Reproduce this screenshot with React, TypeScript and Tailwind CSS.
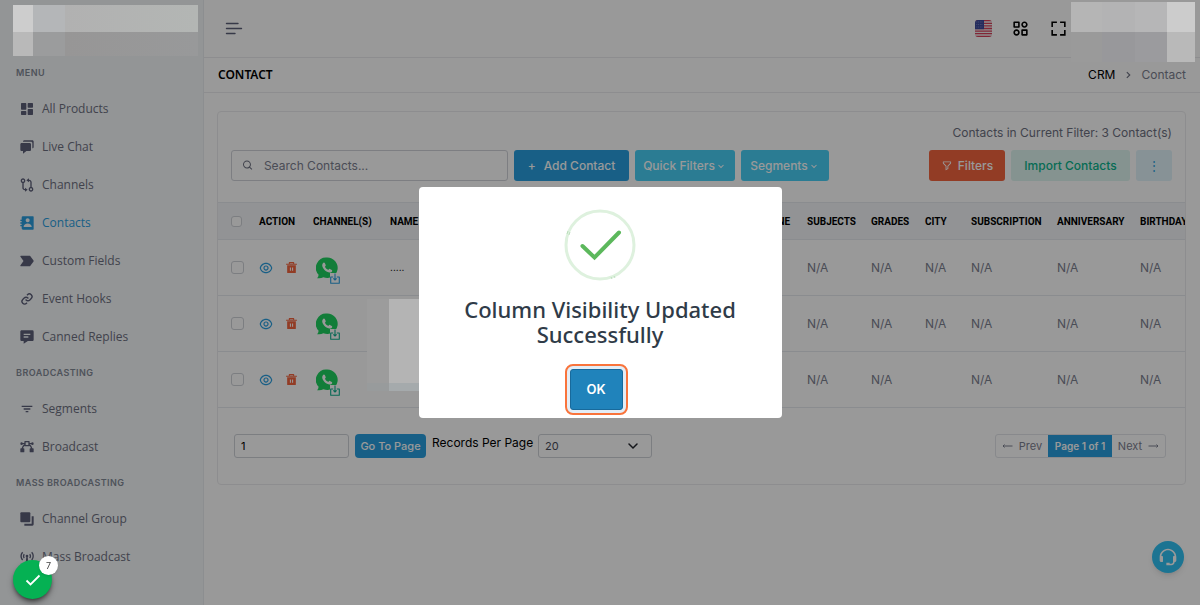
import { useState, type ReactNode } from 'react';
import type { IconType } from 'react-icons';
import {
  BiBroadcast,
  BiCategoryAlt,
  BiChevronDown,
  BiChevronRight,
  BiFilter,
  BiFilterAlt,
  BiFullscreen,
  BiGitCompare,
  BiLink,
  BiSearch,
  BiSolidChat,
  BiSolidContact,
  BiSolidDashboard,
  BiSolidLabel,
  BiSolidMessageDetail,
  BiSolidVector,
  BiSupport,
} from 'react-icons/bi';
import { RiDeleteBin5Fill, RiEyeLine } from 'react-icons/ri';

type MenuItem = { label: string; icon: IconType | typeof GroupIcon; active?: boolean };
type MenuGroup = { title: string; items: MenuItem[] };

const MENU: MenuGroup[] = [
  {
    title: 'MENU',
    items: [
      { label: 'All Products', icon: BiSolidDashboard },
      { label: 'Live Chat', icon: BiSolidChat },
      { label: 'Channels', icon: BiGitCompare },
      { label: 'Contacts', icon: BiSolidContact, active: true },
      { label: 'Custom Fields', icon: BiSolidLabel },
      { label: 'Event Hooks', icon: BiLink },
      { label: 'Canned Replies', icon: BiSolidMessageDetail },
    ],
  },
  {
    title: 'BROADCASTING',
    items: [
      { label: 'Segments', icon: BiFilter },
      { label: 'Broadcast', icon: BiSolidVector },
    ],
  },
  {
    title: 'MASS BROADCASTING',
    items: [
      { label: 'Channel Group', icon: GroupIcon },
      { label: 'Mass Broadcast', icon: BiBroadcast },
    ],
  },
];

const COLUMNS = [
  { label: 'ACTION', width: 'w-[54px]' },
  { label: 'CHANNEL(S)', width: 'w-[77px]' },
  { label: 'NAME', width: 'w-[367px]' },
  { label: 'PHONE', width: 'w-[50px]' },
  { label: 'SUBJECTS', width: 'w-16' },
  { label: 'GRADES', width: 'w-[54px]' },
  { label: 'CITY', width: 'w-[46px]' },
  { label: 'SUBSCRIPTION', width: 'w-[86px]' },
  { label: 'ANNIVERSARY', width: 'w-[83px]' },
  { label: 'BIRTHDAY', width: 'w-[98px]' },
];

const CONTACTS = [
  { id: 1, name: '.....', city: 'N/A', tone: 'text-[#2b9fe0]' },
  { id: 2, name: '', city: 'N/A', tone: 'text-[#12b090]' },
  { id: 3, name: '', city: '', tone: 'text-[#12b090]' },
];

function GroupIcon({ size = 16 }: { size?: number }) {
  return (
    <svg width={size} height={size} viewBox="0 0 24 24" fill="currentColor">
      <rect x="2" y="2" width="15" height="15" rx="1.5" />
      <path d="M19 8h3v12a2 2 0 0 1-2 2H8v-3h11z" />
    </svg>
  );
}

function MenuToggleIcon() {
  return (
    <svg width="18" height="14" viewBox="0 0 18 14" stroke="currentColor" strokeWidth="1.4" strokeLinecap="round">
      <path d="M1.5 1.5h11.5M1.5 6.5h15M1.5 11.5h8.5" />
    </svg>
  );
}

function FlagIcon() {
  return (
    <svg width="17" height="17" viewBox="0 0 17 17">
      <defs>
        <clipPath id="flag">
          <rect width="17" height="17" rx="3" />
        </clipPath>
      </defs>
      <g clipPath="url(#flag)">
        <rect width="17" height="17" fill="#f0f0f0" />
        <path
          d="M0 .7h17M0 3.3h17M0 5.9h17M0 8.5h17M0 11.1h17M0 13.7h17M0 16.3h17"
          stroke="#d8405a"
          strokeWidth="1.3"
        />
        <rect width="9" height="9.2" fill="#3c4a9c" />
        <path d="M1.5 2h6M1.5 4.5h6M1.5 7h6" stroke="#aab0dc" strokeWidth=".7" strokeDasharray=".7 1" />
      </g>
    </svg>
  );
}

function WhatsappIcon() {
  return (
    <svg width="22" height="22" viewBox="0 0 22 22">
      <path
        d="M11.2 .5a10.3 10.3 0 1 1-3.8 19.8c-1.8 1-4 1.3-6.3.9.9-1 1.4-2.1 1.5-3.5A10.3 10.3 0 0 1 11.2.5z"
        fill="#1fd15f"
      />
      <path
        d="M6.9 6.2c.6-.8 1.5-.9 1.9-.1l.9 1.9c.2.5-.1 1-.8 1.7.8 1.5 1.9 2.5 3.4 3.2.7-.9 1.2-1.2 1.6-1l1.9 1c.7.4.5 1.4-.2 2-1.2 1-2.7.9-4.6-.1-1.9-1-3.3-2.5-4.2-4.3-.8-1.7-.8-3.2.1-4.3z"
        fill="#fff"
      />
    </svg>
  );
}

function InboxIcon() {
  return (
    <svg width="10" height="11" viewBox="0 0 10 11" fill="none" stroke="currentColor" strokeLinejoin="round">
      <path d="M3.2 4H.7v6.2h8.6V4H6.8" strokeWidth="1.1" />
      <path d="M5 .5v6.2M3.4 5.3 5 7l1.6-1.7" strokeWidth="1.1" />
    </svg>
  );
}

function ArrowIcon({ flip = false }: { flip?: boolean }) {
  return (
    <svg width="11" height="6" viewBox="0 0 11 6" fill="none" stroke="currentColor" className={flip ? 'rotate-180' : ''}>
      <path d="M.5 3h9.5M8.5 1.5 10 3 8.500 4.500" />
    </svg>
  );
}

function Sidebar() {
  return (
    <aside className="w-[204px] shrink-0 border-r border-[#eaedf0] bg-[#f5f8fb]">
      <div className="h-14 pt-[5px] pl-[13px]">
        <div className="relative z-50 grid w-[185px] grid-cols-[20px_32px_1fr] grid-rows-[27px_24px]">
          <div className="bg-[#cdcdcd]" />
          <div className="bg-[#b4b6b8]" />
          <div className="bg-linear-to-r from-[#b1b1b1] to-[#b3b6b4]" />
          <div className="bg-[#b9b9b9]" />
          <div className="bg-[#9b9c9d]" />
          <div className="bg-linear-to-r from-[#979696] to-[#98999a]" />
        </div>
      </div>
      <nav className="font-['Open_Sans',sans-serif] text-xs">
        {MENU.map((group) => (
          <div key={group.title}>
            <h2 className="flex h-[34px] items-center pl-4 font-['Inter',sans-serif] text-[9px] font-semibold tracking-wider text-[#838a96]">
              {group.title}
            </h2>
            {group.items.map(({ label, icon: Icon, active }) => (
              <a
                key={label}
                href="#"
                className={`flex h-[38px] items-center gap-[7px] pl-[19px] ${active ? 'text-[#2b9fe0]' : 'text-[#6d7080]'}`}
              >
                <span className={active ? '' : 'text-[#5c5f78]'}>
                  <Icon size={16} />
                </span>
                {label}
              </a>
            ))}
          </div>
        ))}
      </nav>
    </aside>
  );
}

function Topbar() {
  return (
    <header className="relative flex h-[58px] items-center justify-between border-b border-[#ebebee] pr-[132px] pl-[21px]">
      <button aria-label="Toggle menu" className="text-[#5c5f78]">
        <MenuToggleIcon />
      </button>
      <div className="flex items-center gap-[19px] text-black">
        <button aria-label="Language">
          <FlagIcon />
        </button>
        <button aria-label="Apps">
          <BiCategoryAlt size={19} />
        </button>
        <button aria-label="Fullscreen">
          <BiFullscreen size={19} />
        </button>
      </div>
      <div className="absolute top-0.5 right-[5px] z-50 grid w-[124px] grid-cols-[31px_33px_32px_28px] grid-rows-[30px_30px]">
        <div className="bg-[#b5b5b5]" />
        <div className="bg-[#b3b3b4]" />
        <div className="bg-[#b6b6b7]" />
        <div className="bg-[#cccccc]" />
        <div className="bg-[#9a9a9a]" />
        <div className="bg-[#98989b]" />
        <div className="bg-[#9b9b9e]" />
        <div className="bg-[#b9b9b9]" />
      </div>
    </header>
  );
}

function ToolbarButton({ className, children }: { className: string; children: ReactNode }) {
  return (
    <button className={`flex h-[31px] items-center justify-center rounded-[3px] text-xs font-medium ${className}`}>
      {children}
    </button>
  );
}

function Toolbar() {
  return (
    <div className="px-[13px] pt-3">
      <p className="text-right text-xs leading-[18px] text-[#6d7080]">Contacts in Current Filter: 3 Contact(s)</p>
      <div className="mt-2 flex items-center justify-between">
        <div className="flex items-center gap-1.5">
          <label className="flex h-[31px] w-[277px] items-center gap-2.5 rounded-[3px] border border-[#d0d3d9] pl-2.5 text-[#6d7080]">
            <BiSearch size={13} />
            <input
              aria-label="Search contacts"
              placeholder="Search Contacts..."
              className="w-full bg-transparent text-xs outline-none placeholder:text-[#7c8090]"
            />
          </label>
          <ToolbarButton className="w-[115px] gap-2 bg-[#299fe0] text-white">
            <span>+</span>
            Add Contact
          </ToolbarButton>
          <ToolbarButton className="w-[100px] bg-[#49cff5] text-white">
            Quick Filters
            <BiChevronDown size={12} />
          </ToolbarButton>
          <ToolbarButton className="w-[88px] bg-[#49cff5] text-white">
            Segments
            <BiChevronDown size={12} />
          </ToolbarButton>
        </div>
        <div className="flex items-center gap-1.5">
          <ToolbarButton className="w-[76px] gap-1.5 bg-[#f3643f] text-white">
            <BiFilterAlt size={11} />
            Filters
          </ToolbarButton>
          <ToolbarButton className="w-[119px] bg-[#def6f0] text-[#0ab38c]">Import Contacts</ToolbarButton>
          <ToolbarButton className="w-9 bg-[#e1f3fa] text-[#2b9fe0]">
            <span aria-label="More">⋮</span>
          </ToolbarButton>
        </div>
      </div>
    </div>
  );
}

function CheckCell({ label, size }: { label: string; size: string }) {
  return (
    <input
      type="checkbox"
      aria-label={label}
      className={`block appearance-none rounded-[3px] border border-[#cfd2d8] bg-white ${size}`}
    />
  );
}

function ContactTable() {
  return (
    <div className="relative mt-[21px] overflow-x-clip">
      <table className="w-full min-w-[1012px] table-fixed border-collapse text-left">
        <thead className="bg-[#f3f6f9]">
          <tr className="h-[37px] border-y border-[#e6e9ee]">
            <th className="w-[33px] pl-[13px]">
              <CheckCell label="Select all contacts" size="size-[11px]" />
            </th>
            {COLUMNS.map((column) => (
              <th
                key={column.label}
                className={`pl-2 font-['Roboto',sans-serif] text-[10px] font-bold text-black ${column.width}`}
              >
                {column.label}
              </th>
            ))}
          </tr>
        </thead>
        <tbody>
          {CONTACTS.map((contact) => (
            <tr key={contact.id} className="h-14 border-b border-[#e6e9ee] text-xs text-[#7c8090]">
              <td className="pl-[13px]">
                <CheckCell label={`Select contact ${contact.id}`} size="size-[13px]" />
              </td>
              <td className="pl-2">
                <div className="flex items-center gap-3">
                  <button aria-label="View contact" className="text-[#2b9fe0]">
                    <RiEyeLine size={14} />
                  </button>
                  <button aria-label="Delete contact" className="text-[#f3643f]">
                    <RiDeleteBin5Fill size={13} />
                  </button>
                </div>
              </td>
              <td className="pl-[11px]">
                <div className="relative w-[22px]">
                  <WhatsappIcon />
                  <span className={`absolute top-4 left-3.5 bg-white ${contact.tone}`}>
                    <InboxIcon />
                  </span>
                </div>
              </td>
              <td className="pl-2 text-[10px] text-black">{contact.name}</td>
              <td />
              <td className="pl-2">N/A</td>
              <td className="pl-2">N/A</td>
              <td className="pl-2">{contact.city}</td>
              <td className="pl-2">N/A</td>
              <td className="pl-2">N/A</td>
              <td className="pl-2">N/A</td>
            </tr>
          ))}
        </tbody>
      </table>
      <div className="absolute top-[97px] left-[149px] z-50 grid grid-cols-[22px_30px] grid-rows-[84px_8px]">
        <div className="bg-[#9c9c9c]" />
        <div className="bg-[#b4b4b4]" />
        <div className="bg-[#989b9c]" />
        <div className="bg-[#a5aaac]" />
      </div>
    </div>
  );
}

function Pager() {
  const [page, setPage] = useState('1');

  return (
    <div className="flex items-center justify-between pt-[26px] pr-[19px] pb-[26px] pl-4 text-[11px]">
      <div className="flex items-center gap-1.5">
        <input
          aria-label="Page number"
          value={page}
          onChange={(e) => setPage(e.target.value)}
          className="h-6 w-[115px] rounded-[3px] border border-[#cfd2d8] px-1.5 text-black outline-none"
        />
        <button className="h-6 w-[71px] rounded-sm bg-[#299fe0] font-medium text-white">Go To Page</button>
        <label htmlFor="per-page" className="w-[100px] pb-1.5 text-xs whitespace-nowrap text-black">
          Records Per Page
        </label>
        <div className="relative">
          <select
            id="per-page"
            defaultValue="20"
            className="block h-6 w-[114px] appearance-none rounded-[3px] border border-[#cfd2d8] bg-white px-1.5 text-[#4a4d5a] outline-none"
          >
            <option>20</option>
            <option>50</option>
            <option>100</option>
          </select>
          <svg
            className="pointer-events-none absolute top-2 right-3.5"
            width="10"
            height="8"
            viewBox="0 0 10 8"
            fill="none"
            stroke="#22252c"
            strokeWidth="1.5"
            strokeLinecap="round"
          >
            <path d="M1 2l4 4 4-4" />
          </svg>
        </div>
      </div>
      <div className="flex h-6 overflow-hidden rounded-[3px] border border-[#e3e5ea] text-[#7c8090]">
        <button className="flex w-[52px] items-center justify-center gap-1.5">
          <ArrowIcon flip />
          Prev
        </button>
        <span className="-my-px flex w-16 items-center justify-center bg-[#299fe0] text-[10px] font-semibold text-white">
          Page 1 of 1
        </span>
        <button className="flex w-[53px] items-center justify-center gap-1.5">
          Next
          <ArrowIcon />
        </button>
      </div>
    </div>
  );
}

function SuccessDialog() {
  return (
    <div className="fixed inset-0 z-40 flex items-center justify-center bg-black/40">
      <div
        role="dialog"
        aria-modal="true"
        aria-labelledby="dialog-title"
        className="flex w-[363px] flex-col items-center rounded bg-white pt-[22px] pb-[3px]"
      >
        <svg width="72" height="72" viewBox="0 0 72 72" fill="none">
          <circle cx="36" cy="36" r="34" stroke="#def1de" strokeWidth="3" />
          <path d="M3 25l1-3M5 26l1-3M47 68l1 2M50 67l1 2" stroke="#a9d6ab" strokeWidth=".7" />
          <path d="M18.5 37 30.5 48.5 55 23.5" stroke="#5cb85c" strokeWidth="4" strokeLinecap="round" />
        </svg>
        <h2
          id="dialog-title"
          className="mt-4 w-[300px] text-center font-['Noto_Sans',sans-serif] text-[22px] leading-[25px] font-medium text-[#2f3b48]"
        >
          Column Visibility Updated Successfully
        </h2>
        <div className="mt-[17px] mr-2 rounded-lg border-2 border-[#f9743c] bg-[#e3edf6] p-[3px]">
          <button className="h-[41px] w-[53px] rounded-[3px] border border-[#186a9c] bg-[#2083bb] text-[13px] font-semibold text-white">
            OK
          </button>
        </div>
      </div>
    </div>
  );
}

export default function App() {
  return (
    <div className="flex min-h-screen bg-white font-['Inter',sans-serif]">
      <Sidebar />
      <div className="min-w-0 flex-1">
        <Topbar />
        <div className="flex h-[35px] items-center justify-between border-b border-[#ebebee] px-3.5">
          <h1 className="font-['Noto_Sans',sans-serif] text-xs font-semibold text-black">CONTACT</h1>
          <div className="flex items-center gap-1.5 text-xs">
            <a href="#" className="text-black">
              CRM
            </a>
            <BiChevronRight size={14} className="text-[#6d7080]" />
            <span className="text-[#7c8090]">Contact</span>
          </div>
        </div>
        <main className="mt-[18px] mr-3.5 ml-[13px] rounded border border-[#ececef]">
          <Toolbar />
          <ContactTable />
          <Pager />
        </main>
      </div>

      <button
        aria-label="Support"
        className="fixed right-4 bottom-8 flex size-8 items-center justify-center rounded-full bg-[#30c2f4] text-white shadow-md"
      >
        <BiSupport size={20} />
      </button>

      <SuccessDialog />

      <button
        aria-label="Checklist"
        className="fixed bottom-1.5 left-[13px] z-50 flex size-[39px] items-center justify-center rounded-full bg-[#05b153] text-white shadow-md shadow-black/50"
      >
        <svg width="16" height="12" viewBox="0 0 16 12" fill="none" stroke="currentColor" strokeWidth="1.8">
          <path d="M1.5 6.5l4 4 9-9" />
        </svg>
        <span className="absolute -top-1 left-[26px] flex size-[19px] items-center justify-center rounded-full bg-white text-[9px] text-[#444] shadow">
          7
        </span>
      </button>
    </div>
  );
}
